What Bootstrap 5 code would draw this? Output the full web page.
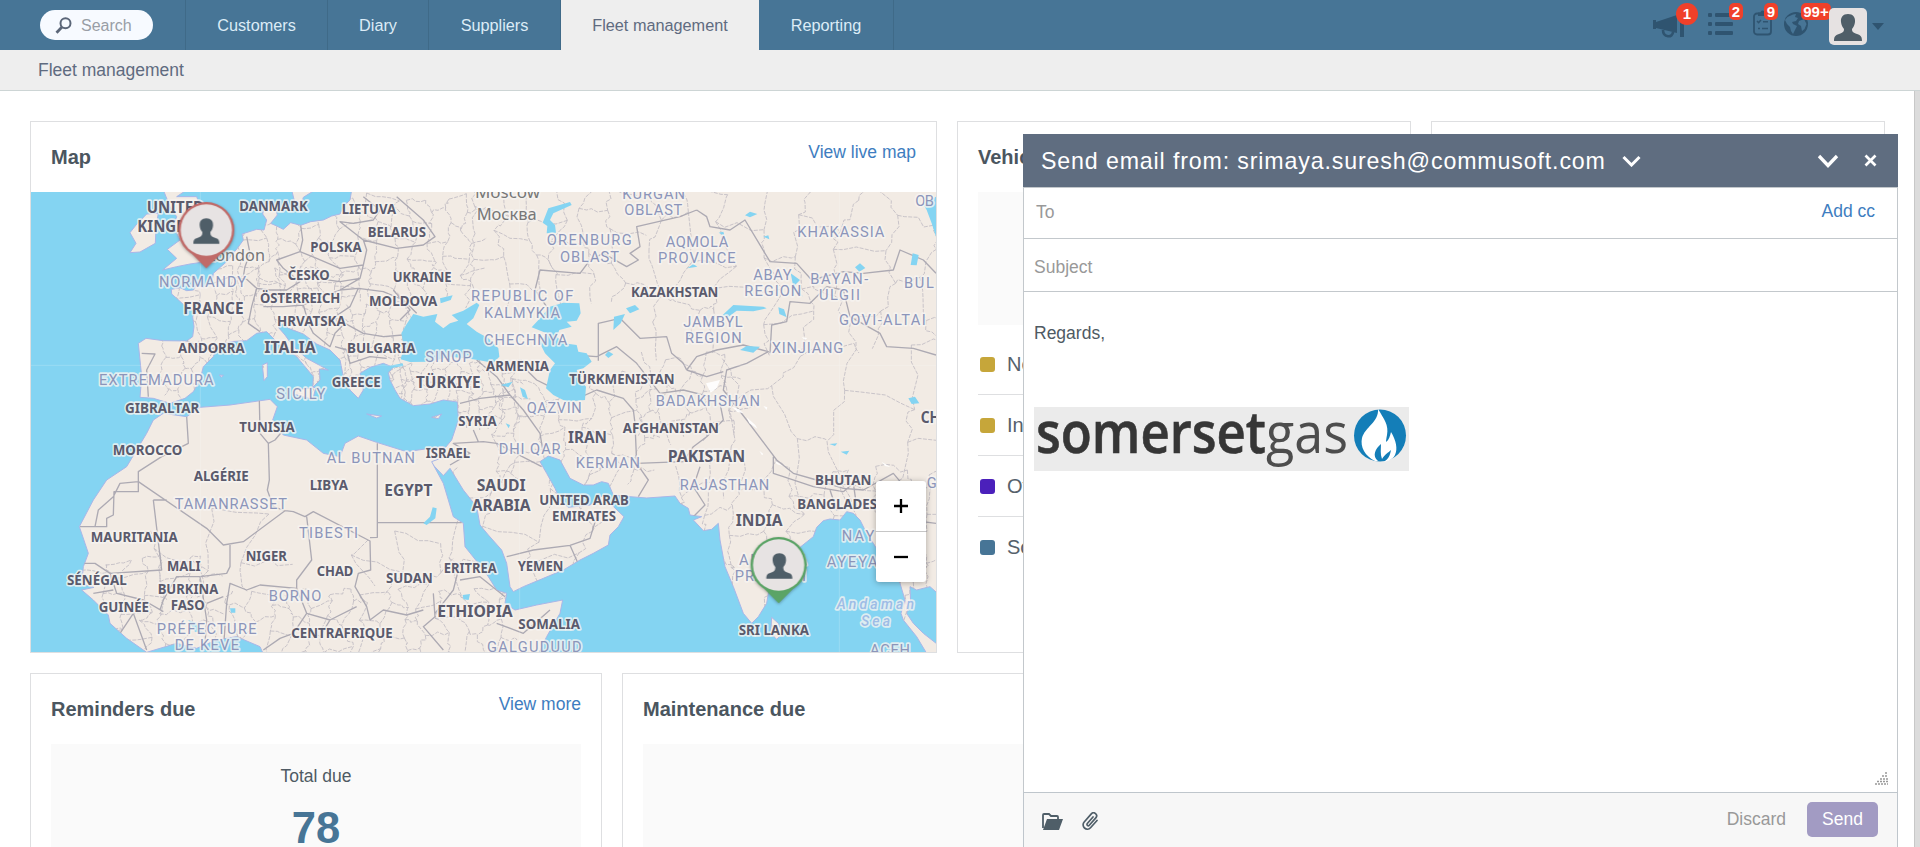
<!DOCTYPE html>
<html lang="en">
<head>
<meta charset="utf-8">
<meta name="viewport" content="width=device-width, initial-scale=1">
<title>Fleet management</title>
<link href="https://cdn.jsdelivr.net/npm/bootstrap@5.3.0/dist/css/bootstrap.min.css" rel="stylesheet">
<style>
body{font-family:"Liberation Sans",Arial,sans-serif;font-size:17.5px;line-height:24px;color:#4f5a63;overflow:hidden;height:847px;background:#fff}
a{color:#3e7dc0;text-decoration:none}
.topbar{height:50px;background:#477596}
.search-wrap{width:186px;padding-left:40px;border-right:1px solid #3f6a88}
.search-pill{width:113px;height:30px;border-radius:15px;background:#f7faff;padding-left:15px;font-size:16px;color:#999ea6}
.topbar .nav-link{height:50px;font-size:16.25px;line-height:50px;padding:0;text-align:center;color:#dcecf7;border-right:1px solid #3f6a88}
.topbar .nav-link.active{background:#eee;color:#5f6b80;border:0}
.tool{position:relative;height:50px;flex:none;color:#2f5470}
.tool svg{position:absolute;left:0}
.count{position:absolute;top:3px;height:17px;line-height:18px;border-radius:5px;background:#f0402a;color:#fff;font-size:15px;font-weight:700;text-align:center}
.subbar{height:41px;background:#eee;border-bottom:1px solid #cdd5d5;padding-left:38px;line-height:41px;color:#5f6b80}
.content{padding:30px 29px 0 30px;height:756px;overflow:hidden;width:1914px}
.panel{border:1px solid #dedfe1;border-radius:0;background:#fff;overflow:hidden;flex:none}
.panel-head{height:70px;padding:0 20px}
.panel-head h2{font-size:20px;font-weight:700;line-height:24px;margin:0;padding-top:23px;color:#4b565f}
.panel-head a{margin-top:18px;line-height:24px}
.graybox{background:#fafafa}
.status{height:61px;font-size:20px;color:#56616b;border-bottom:1px solid #dedfe1;padding-left:2px;gap:12px}
.status:last-child{border-color:transparent}
.swatch{width:15px;height:15px;border-radius:3px;flex:none}
.total{font-size:43.5px;line-height:48px;font-weight:700;color:#477596}
.scrolltrack{position:fixed;right:0;top:91px;bottom:0;width:6px;background:#dcdcdc;border-left:1px solid #c8c8c8}
.zoomer{position:absolute;right:10px;top:289px;width:50px;border-radius:3px;background:#fff;box-shadow:0 1px 6px rgba(0,0,0,.3)}
.zoomer span{height:50px}
.zoomer span:first-child{height:51px;border-bottom:1px solid #c6c6c6}
.mailer{position:fixed;top:134px;right:22px;width:875px;bottom:0;background:#fff;z-index:5}
.mail-head{height:53px;background:#5f6d80;color:#fff;font-size:23.2px;padding:0 21px 0 18px;flex:none}
.mail-row{border:1px solid #c3c8cc;border-bottom:0;flex:none}
.ph{color:#999}
.mail-foot{height:55px;background:#f7f7f7;border:1px solid #bfc6cc;border-bottom:0;padding:0 19px 2px 18px;flex:none;color:#999}
.mail-foot svg{margin-top:4px}
.send,.send:hover{background:#a29bc3;color:#fff;width:71px;height:35px;border-radius:5px;padding:0;font-size:17.5px;line-height:33px;border:0;margin-left:21px}
.country{font-family:"Noto Sans",sans-serif;font-weight:700;fill:#5a5a6c}
.region{font-family:Roboto,"Noto Sans",sans-serif;fill:#8c95ba}
.city{font-family:"Noto Sans",sans-serif;fill:#777}
.sea{font-family:Roboto,sans-serif;font-style:italic;font-weight:500;fill:#9dbce6}
.lbl{paint-order:stroke;stroke:#f7f4f1;stroke-width:10;stroke-linejoin:round;stroke-opacity:.8}
</style>
</head>
<body>
<header class="topbar d-flex">
  <div class="search-wrap d-flex align-items-center">
    <div class="search-pill d-flex align-items-center">
      <svg width="17" height="17" viewBox="0 0 17 17" fill="none" stroke="#5b6678"><circle cx="10.5" cy="6.2" r="5" stroke-width="2"/><path d="M7 10L1.5 15.7" stroke-width="2.8"/></svg>
      <span style="margin-left:9px;margin-top:2px">Search</span>
    </div>
  </div>
  <nav class="nav flex-nowrap">
    <a class="nav-link" href="#" style="width:142px">Customers</a>
    <a class="nav-link" href="#" style="width:101px">Diary</a>
    <a class="nav-link" href="#" style="width:132px">Suppliers</a>
    <a class="nav-link active" href="#" style="width:198px">Fleet management</a>
    <a class="nav-link" href="#" style="width:135px">Reporting</a>
  </nav>
  <div class="d-flex ms-auto" style="padding-right:36px">
    <div class="tool" style="width:31px"><svg style="top:15px" width="31" height="23" viewBox="0 0 31 23" fill="currentColor"><path d="M0 5h3v2L24 0v18L3 13v1H0zM27 1h4v21h-4z"/><path d="M10 15c0 8 10 8 10 2" fill="none" stroke="currentColor" stroke-width="2.6"/></svg><span class="count" style="left:23px;width:22px;height:22px;line-height:22px;border-radius:50%">1</span></div>
    <div class="tool" style="width:25px;margin-left:24px"><svg style="top:13px" width="25" height="22" viewBox="0 0 25 22" fill="currentColor"><rect y="0" width="4" height="4" rx="1"/><rect y="9" width="4" height="4" rx="1"/><rect y="18" width="4" height="4" rx="1"/><rect x="7" y="0" width="18" height="4" rx="1"/><rect x="7" y="9" width="18" height="4" rx="1"/><rect x="7" y="18" width="18" height="4" rx="1"/></svg><span class="count" style="left:21px;width:14px">2</span></div>
    <div class="tool" style="width:19px;margin-left:20px"><svg style="top:9px" width="19" height="27" viewBox="0 0 19 27" fill="none" stroke="currentColor" stroke-width="1.8"><rect x="1" y="4.5" width="17" height="21" rx="3"/><path d="M4 12l1.6 1.6L8 11M10 12.800h5M5 19.500h2M9 19.500h6" stroke-width="1.500"/><path d="M5 7V3.500h2.500a2 2 0 0 1 4 0H14V7z" fill="currentColor" stroke="none"/></svg><span class="count" style="left:11px;width:14px">9</span></div>
    <div class="tool" style="width:24px;margin-left:12px"><svg style="top:12px" width="24" height="24" viewBox="0 0 24 24"><circle cx="12" cy="12" r="12" fill="currentColor"/><path d="M3.500 5L9 2.500l3-.5-1 3 3 1-2 3-4 1 1 2 4 2-2 4-2 4-2-3-1-4-3-3-2-4zM15 9l5-2 2.500 5-2 5-2.500 2-1-5-3-2z" fill="#477596"/></svg><span class="count" style="left:17px;width:30px">99+</span></div>
    <div class="tool" style="width:38px;margin-left:21px"><svg style="top:8px" width="38" height="37" viewBox="0 0 38 37"><rect width="38" height="37" rx="5" fill="#e6e2e2"/><path d="M19 6c5 0 7.500 3.500 7 8-.3 3-1.500 5-3 7 0 3 1 3.500 5 5 4 1.300 5 3 5 7H5c0-4 1-5.700 5-7 4-1.500 5-2 5-5-1.500-2-2.700-4-3-7-.5-4.500 2-8 7-8z" fill="#4f5e68"/></svg></div>
    <div class="tool" style="width:12px;margin-left:5px"><svg style="top:23px" width="12" height="7"><path d="M0 0h12L6 7z" fill="currentColor"/></svg></div>
  </div>
</header>
<div class="subbar">Fleet management</div>

<main class="content d-flex flex-column" style="gap:20px">
  <div class="d-flex" style="gap:20px;height:532px">
    <section class="panel" style="width:907px">
      <div class="panel-head d-flex justify-content-between align-items-start"><h2>Map</h2><a href="#">View live map</a></div>
      <div class="position-relative">
        <svg id="map" class="d-block" width="905" height="460" viewBox="3 6 2715 1380">
          <defs>
            <clipPath id="landclip">
              <path id="eurasia" d="M325 460L348 445 400 452 470 453 488 440 492 410 488 380 500 365 465 348 440 325 425 312 424 298 450 293 470 302 490 300 500 285 520 292 545 280 550 250 590 215 605 195 622 175 640 150 636 132 680 118 702 120 710 90 698 72 705 40 735 44 742 75 722 100 740 108 760 118 782 98 812 106 842 95 880 90 905 78 930 72 940 50 960 30 965 0H2725V1212L2700 1190 2660 1200 2640 1190 2642 1240 2630 1270 2650 1300 2680 1330 2725 1365V1390H2690L2660 1340 2620 1290 2613 1270 2625 1230 2610 1180 2560 1110 2530 1060 2510 1030 2490 990 2470 970 2450 965 2430 990 2400 987 2380 992 2360 1012 2350 1040 2310 1072 2260 1120 2220 1180 2210 1240 2185 1280 2165 1300 2140 1270 2110 1190 2085 1130 2070 1050 2065 1000 2045 1018 2020 1022 1990 990 2015 980 1980 975 1975 955 1950 940 1935 918 1850 924 1800 920 1750 915 1735 880 1715 875 1690 885 1660 885 1620 865 1590 810 1555 798 1530 815 1550 850 1575 895 1590 930 1615 952 1680 945 1720 915 1735 935 1782 980 1765 1010 1740 1035 1735 1065 1690 1090 1650 1110 1600 1140 1540 1165 1480 1190 1450 1205 1440 1190 1430 1120 1415 1080 1375 1035 1350 1005 1340 950 1300 900 1260 835 1240 857 1200 815 1240 780 1265 750 1285 690 1282 636 1240 630 1200 642 1150 647 1110 625 1095 600 1080 570 1075 548 1090 532 1060 520 1020 532 990 550 1000 600 985 625 960 600 940 560 930 510 900 480 860 462 820 432 775 415 760 400 745 412 765 435 790 470 830 505 895 540 868 537 870 570 848 592 850 560 800 500 740 455 710 425 680 430 650 452 600 455 560 472 550 500 520 530 510 570 490 605 465 625 420 640 370 625 330 622 335 560Z"/>
              <path id="africa" d="M370 690L400 670 470 680 510 652 600 645 720 628 742 650 728 690 760 735 830 750 880 790 930 800 945 760 985 738 1040 757 1130 785 1200 775 1240 770 1245 800 1205 815 1240 880 1270 980 1300 1000 1305 1070 1345 1120 1375 1160 1400 1200 1430 1210 1425 1240 1455 1260 1520 1245 1598 1230 1590 1270 1550 1340 1525 1392H700L690 1370 620 1340 560 1350 500 1375 440 1360 350 1387 290 1345 240 1300 235 1275 190 1230 155 1200 192 1192 155 1182 160 1130 175 1090 165 1060 148 1010 190 930 230 870 290 830 320 780 350 730Z"/>
              <path id="isles" d="M400 0H470L440 20 500 20 515 60 530 100 560 150 570 180 548 212 480 222 440 230 398 240 440 205 412 178 450 150 430 110 440 80 420 50ZM350 72L385 70 378 110 376 160 330 186 300 188 318 160 300 128 318 105ZM785 0H855L820 22 812 50 795 40ZM697 525L712 518 712 560 702 572ZM790 600L858 592 848 628 790 612ZM1010 672L1055 678 1040 684ZM1205 682L1235 672 1225 686ZM2225 1282L2245 1300 2258 1330 2240 1348 2222 1330ZM568 555L580 556 574 562Z"/>
            </clipPath>
            <g id="person"><path d="M0-38c14 0 21 9 20 22-1 9-4 14-8 19 0 10 2 13 14 17 10 3 13 7 13 18h-78c0-11 3-15 13-18 12-4 14-7 14-17-4-5-7-10-8-19-1-13 6-22 20-22z" fill="#4f5e68"/></g>
          </defs>
          <rect x="3" y="6" width="2715" height="1380" fill="#84d4f2"/>
          <g fill="#f2ebe4" stroke="#a9b6e8" stroke-width="3"><use href="#eurasia"/><use href="#africa"/><use href="#isles"/></g>
          <g clip-path="url(#landclip)" fill="none" stroke="#c2bdc4" stroke-linejoin="round">
            <path id="mesh" stroke-width="2.600" stroke-dasharray="12 4"/>
            <g stroke="#adaab3" stroke-width="4">
              <path d="M335 490L375 492 350 540 355 620M470 452L520 478 590 470M545 282L600 260 650 268 680 295 665 350 655 400 690 425M650 140L660 190 645 230 640 260M812 106L818 150 810 185 740 210 760 235 810 275 770 300 720 300 680 295M810 185L860 205 930 235 1000 225 1010 180 1000 150 930 95 970 100 1030 90 1050 60 1000 20M1000 150L1100 175 1180 165 1215 140 1180 90 1100 20M860 265L930 275 990 265 1000 225M700 350L760 350 820 345 880 320 930 300 990 265M930 300L985 295 1060 305 1120 330 1160 370M820 345L830 380 900 390 960 350 985 295M830 390L850 430 900 470 915 430 945 400 1000 430 1060 440 1118 435M915 470L950 480 960 520 1020 500 1070 505M1090 300L1140 360 1110 390"/>
              <path d="M470 680L475 760 395 800 325 845 325 905H252L250 975 230 985V1010H150M325 875L270 880 250 920 205 960 195 1010M325 875L530 1015 580 1065 640 1055 765 962 790 965 825 980 850 965 1020 1053 1022 1140 985 1150 975 1190 1010 1250 1020 1290 1060 1260 1130 1275 1180 1260M688 630L690 730 715 760 735 750 760 720M715 760L718 870 712 900 730 950 765 962M1042 760L1042 1042 1020 1043M1042 998H1295M830 980L845 1110 800 1170 800 1195 690 1185 650 1200 600 1180 590 1240 580 1380M600 1065V1130L590 1150 510 1160 440 1160 400 1230 390 1260M370 930L395 1140 240 1150 195 1120 160 1120M370 930H410M240 1150L260 1210 340 1230 400 1265M190 1210L250 1200M270 1330L310 1270 350 1380M510 1160L530 1290 525 1360M530 1240L580 1220M800 1195L830 1270 790 1330 750 1345 700 1380M830 1270L900 1290 980 1250M900 1290L870 1340M1210 1210L1215 1280 1180 1310 1240 1380M1290 1120L1270 1200 1215 1270M1290 1170L1350 1160 1425 1220M1400 1300L1480 1330 1560 1260"/>
              <path d="M1260 825L1320 790 1270 760 1360 755 1400 760 1535 830M1330 720L1345 755M1290 640L1350 625 1440 615 1480 660 1530 730 1540 790M1440 615L1400 560 1340 510M1430 1100L1510 1080 1620 1066 1642 1115M1620 1066L1680 1045 1700 980M1480 530L1520 570 1560 590M1655 620L1700 600 1780 625 1810 660 1815 700 1820 820 1855 870 1825 920M1820 820L1960 815 1990 770 2030 740 2080 690 2070 640M1705 512V400L1770 385 1830 445 1910 440 1925 490 1960 520 1970 540M1630 495L1700 500 1760 470 1820 520 1890 610 1960 600 2040 620M1970 540L2000 500 2060 480 2140 465 2215 485 2150 520 2090 540 2080 600 2150 690 2210 770 2240 810 2290 850 2360 870 2440 895M1970 540L2030 560 2080 545M2220 490L2225 405 2270 395 2280 335 2340 340 2390 290M2000 60L1950 80 1820 110 1830 170 1800 190 1825 210 1790 230 1720 190 1680 210 1650 250 1530 240 1515 300 1550 350M2000 60L2030 80 2040 110 2100 120 2145 90 2220 215 2300 220 2345 270 2440 245 2500 250 2590 240 2610 180 2680 210 2718 250M2390 290L2440 300 2460 380 2550 430 2570 470 2650 475 2718 495M2230 800L2230 850 2260 860 2350 890 2440 905M2400 900L2420 960 2450 950M2440 895L2500 900 2590 850 2640 910M2440 905L2470 880 2480 950M1990 980L2025 945 1990 890 2010 830M2610 1180L2600 1100 2640 1030 2640 990 2718 1000"/>
            </g>
          </g>
          <g fill="#84d4f2">
            <path d="M1114 430L1130 402 1150 372 1180 380 1222 372 1215 395 1240 415 1260 400 1285 392 1265 375 1300 362 1340 338 1348 345 1330 385 1310 402 1340 425 1375 445 1405 475 1408 500 1390 518 1330 508 1260 500 1200 515 1140 516 1112 508 1122 470ZM1230 325L1268 316 1262 330 1232 340ZM1075 528L1118 520 1120 528 1085 534Z"/>
            <path d="M1530 385L1560 350 1600 338 1648 340 1652 370 1640 392 1610 395 1625 410 1588 420 1580 440 1602 460 1640 465 1645 485 1670 490 1685 515 1660 535 1640 540 1650 570 1668 590 1665 630 1610 635 1570 615 1548 595 1560 540 1575 520 1545 490 1530 460 1550 430 1505 412Z"/>
            <path d="M1555 55L1620 36 1625 45 1570 70 1560 90 1575 105 1578 128 1550 130 1552 108 1538 98ZM1750 420L1752 380 1785 372 1772 400ZM1788 355L1815 345 1828 358 1800 370ZM2078 375L2110 345 2200 350 2210 355 2170 364 2120 362 2090 385ZM2130 480L2150 468 2190 470 2170 488ZM2245 352L2262 358 2270 382 2248 372ZM2145 76L2160 65 2182 72 2160 82ZM2066 128L2080 125 2084 138ZM2200 140L2215 136 2218 148ZM1972 235L1990 222 2002 230ZM2475 232L2490 220 2506 234 2488 245ZM2642 225L2648 190 2666 195 2660 226ZM2678 40L2718 20V140L2705 100 2690 60ZM2282 250L2310 270 2290 290 2320 320 2292 300ZM1725 495L1735 484 1750 493 1735 504ZM1412 585L1448 575 1435 592ZM1470 592L1485 600 1494 628 1478 620ZM2635 625L2655 620 2668 640 2645 642ZM1180 1000L1200 980 1208 952 1220 955 1216 985 1190 1005ZM600 1255H616V1268H603ZM1298 1215L1320 1212 1316 1230 1300 1228ZM475 1290L500 1300 508 1320 525 1328 495 1325ZM2398 762L2422 760 2415 768ZM2432 785L2458 782 2450 794ZM1427 700L1440 705 1436 715Z"/>
          </g>
          <g fill="#fff" opacity=".9"><path d="M2028 580L2070 570 2060 595 2042 608ZM2105 650L2128 658 2140 670 2122 666ZM2150 682L2176 705 2182 716 2158 700ZM2188 782L2200 792 2196 796ZM2235 812L2258 828 2240 822ZM2315 442L2332 444 2325 450ZM2200 648L2212 652 2210 660ZM2555 815L2582 832 2565 828Z"/></g>
          <path d="M3 526H2718M511 6V1386M1469 6V1386M2428 6V1386" stroke="#fff" stroke-width="2" opacity=".28"/>
          <g id="labels"></g>
          <g id="pins" style="filter:drop-shadow(0 3px 5px rgba(0,0,0,.3))">
            <g transform="translate(529 120)" fill="#c06a68"><path d="M-45 70H45L0 115z"/><circle r="84"/><circle r="77" fill="#e7e3e3"/><use href="#person" y="3"/></g>
            <g transform="translate(2246 1125)" fill="#5ba466"><path d="M-45 70H45L0 115z"/><circle r="84"/><circle r="77" fill="#e7e3e3"/><use href="#person" x="2" y="3"/></g>
          </g>
        </svg>
        <div class="zoomer">
          <span class="d-flex align-items-center justify-content-center"><svg width="14" height="14"><path d="M0 7h14M7 0v14" stroke="#000" stroke-width="2.300"/></svg></span>
          <span class="d-flex align-items-center justify-content-center"><svg width="14" height="14"><path d="M0 7h14" stroke="#000" stroke-width="2.300"/></svg></span>
        </div>
      </div>
    </section>
    <section class="panel" style="width:454px">
      <div class="panel-head"><h2>Vehicles</h2></div>
      <div style="padding:0 20px">
        <div class="graybox" style="height:133px;margin-bottom:9px"></div>
        <div class="status d-flex align-items-center"><i class="swatch" style="background:#c6a63a"></i>No status</div>
        <div class="status d-flex align-items-center"><i class="swatch" style="background:#c6a63a"></i>In use</div>
        <div class="status d-flex align-items-center"><i class="swatch" style="background:#4b20bb"></i>Off road</div>
        <div class="status d-flex align-items-center"><i class="swatch" style="background:#477596"></i>Sold</div>
      </div>
    </section>
    <section class="panel" style="width:454px"></section>
  </div>
  <div class="d-flex" style="gap:20px;height:300px">
    <section class="panel" style="width:572px">
      <div class="panel-head d-flex justify-content-between align-items-start"><h2>Reminders due</h2><a href="#">View more</a></div>
      <div class="graybox text-center" style="margin:0 20px;height:200px;padding-top:20px"><div>Total due</div><div class="total" style="margin-top:16px">78</div></div>
    </section>
    <section class="panel" style="width:1263px">
      <div class="panel-head"><h2>Maintenance due</h2></div>
      <div class="graybox" style="margin:0 20px;height:200px"></div>
    </section>
  </div>
</main>
<div class="scrolltrack"></div>

<section class="mailer d-flex flex-column">
  <div class="mail-head d-flex align-items-center">
    <span id="from" style="letter-spacing:.86px;white-space:nowrap">Send email from: srimaya.suresh@commusoft.com</span>
    <svg style="margin-left:16px" width="19" height="12" fill="none" stroke="#fff" stroke-width="3"><path d="M1.500 2l8 8 8-8"/></svg>
    <svg class="ms-auto" width="22" height="14" fill="none" stroke="#fff" stroke-width="3.300"><path d="M2 2l9 9.500L20 2"/></svg>
    <svg style="margin-left:25px" width="13" height="13" stroke="#fff" stroke-width="2.700"><path d="M1.500 1.500l10 10M11.500 1.500l-10 10"/></svg>
  </div>
  <div class="mail-row d-flex justify-content-between" style="height:51px;padding:11px 22px 0 12px"><span class="ph" style="padding-top:1px">To</span><a href="#">Add cc</a></div>
  <div class="mail-row ph" style="height:53px;padding:16px 10px 0">Subject</div>
  <div class="mail-row flex-grow-1 position-relative" style="padding:29px 10px">
    <div>Regards,</div>
    <svg class="d-block" style="margin-top:62px" width="375" height="64" viewBox="0 0 375 64">
      <rect width="375" height="64" fill="#ebebeb"/>
      <g font-family="Open Sans, sans-serif"><text x="2" y="45.500" font-size="57" font-weight="600" fill="#363636" stroke="#363636" stroke-width=".6" textLength="230" lengthAdjust="spacingAndGlyphs">somerset</text><text x="232" y="45.500" font-size="57" font-weight="500" fill="#4d4d4d" textLength="82" lengthAdjust="spacingAndGlyphs">gas</text></g>
      <circle cx="346" cy="28.500" r="26" fill="#147eb8"/>
      <path d="M344 2c6 10 11 16 9 26-.5 3-1 5-1 7 3-2 4-6 5-10 5 8 7 17 4 23-2 4-7 6-11 7 4-3 6-6 7-12-3 3-6 4-9 9-2-5-1-10-1-15-6 5-9 12-3 17l-3 0c-10-5-15-14-13-23 3-11 17-16 16-29z" fill="#fff"/>
    </svg>
    <svg class="position-absolute" style="right:9px;bottom:7px" width="13" height="13" stroke="#999" stroke-width="1.500" stroke-dasharray="2 1"><path d="M10 1h3M7 4h6M5 7h8M2 9.500h11M0 12h13"/></svg>
  </div>
  <div class="mail-foot d-flex align-items-center">
    <svg width="21" height="17" viewBox="0 0 21 17"><path d="M1 15V2q0-1 1-1h5l2 2h6q1 0 1 1v2" fill="none" stroke="#4f5e68" stroke-width="1.800"/><path d="M5 6h16l-4 11H1z" fill="#4f5e68"/></svg>
    <svg style="margin-left:18px" width="18" height="18" viewBox="0 0 18 18" fill="none" stroke="#4f5e68" stroke-width="1.700" stroke-linecap="round"><path d="M12 5L6.300 11.500a1.300 1.300 0 0 0 2 1.800l6.500-7.400a3 3 0 0 0-4.500-4L3.200 10a4.200 4.200 0 0 0 6.300 5.700L16 8.500"/></svg>
    <span class="ms-auto">Discard</span><button class="btn send">Send</button>
  </div>
</section>
<script src="https://cdn.jsdelivr.net/npm/bootstrap@5.3.0/dist/js/bootstrap.bundle.min.js"></script>
<script>
// [text, left, right, baseline, size]
const countries=[["UNITED",350,522,68,48],["KINGDOM",322,550,126,48],["DANMARK",628,833,62],["LIETUVA",935,1098,71],["BELARUS",1013,1188,142],["POLSKA",841,995,187],["ČESKO",773,899,270],["UKRAINE",1088,1265,277],["ÖSTERREICH",690,931,340],["MOLDOVA",1017,1222,348],["FRANCE",460,641,371,48],["HRVATSKA",741,947,408],["ANDORRA",444,644,490],["ITALIA",703,857,489,48],["BULGARIA",951,1157,489],["GREECE",905,1052,592],["TÜRKIYE",1158,1352,594,48],["GIBRALTAR",285,508,669],["TUNISIA",628,794,727],["ARMENIA",1368,1557,542],["KAZAKHSTAN",1803,2065,321],["TÜRKMENISTAN",1618,1934,581],["SYRIA",1285,1400,707],["MOROCCO",248,457,795],["ALGÉRIE",491,656,873],["LIBYA",839,954,901],["EGYPT",1063,1207,918,48],["ISRAEL",1187,1320,805],["MAURITANIA",182,443,1055],["MALI",411,512,1142],["NIGER",647,771,1112],["CHAD",860,970,1158],["SUDAN",1068,1208,1180],["ERITREA",1241,1400,1150],["SÉNÉGAL",111,290,1184],["BURKINA",383,565,1211],["FASO",422,524,1260],["GUINÉE",206,357,1265],["CENTRAFRIQUE",784,1088,1345],["ETHIOPIA",1222,1448,1280,48],["SAUDI",1340,1487,903,48],["ARABIA",1325,1502,962,48],["AFGHANISTAN",1778,2067,728],["IRAN",1614,1731,760,48],["PAKISTAN",1913,2146,817,48],["UNITED ARAB",1528,1796,944],["EMIRATES",1566,1758,993],["BHUTAN",2355,2524,884],["BANGLADESH",2302,2572,957],["INDIA",2117,2258,1008,48],["YEMEN",1463,1600,1143],["SOMALIA",1465,1650,1317],["SRI LANKA",2126,2337,1334],["CH",2672,2730,700,46]];
const regions=[["NORMANDY",387,648,290],["EXTREMADURA",207,551,585],["SICILY",739,886,628],["SINOP",1186,1325,515],["REPUBLIC OF",1323,1630,334],["KALMYKIA",1362,1590,384],["CHECHNYA",1362,1612,464],["QAZVIN",1490,1655,669],["KURGAN",1777,1965,26],["OBLAST",1783,1957,76],["ORENBURG",1550,1805,165],["OBLAST",1590,1767,215],["AQMOLA",1907,2095,171],["PROVINCE",1884,2117,220],["ABAY",2170,2285,270],["REGION",2143,2314,319],["BAYAN-",2341,2515,282],["ULGII",2367,2490,331],["BUL",2622,2712,293],["OB",2656,2712,47],["KHAKASSIA",2302,2563,141],["GOVI-ALTAI",2427,2687,406],["XINJIANG",2225,2440,490],["JAMBYL",1960,2138,410],["REGION",1965,2135,459],["BADAKHSHAN",1877,2190,648],["AL BUTNAN",890,1155,818],["TAMANRASSET",434,771,957],["TIBESTI",807,984,1043],["BORNO",716,874,1232],["PRÉFECTURE",380,680,1332],["DE KEVE",434,627,1381],["DHI QAR",1406,1592,791],["KERMAN",1637,1830,834],["RAJASTHAN",1949,2218,899],["G",2690,2714,895],["ANDHRA",2127,2330,1124],["PRADESH",2114,2328,1174],["NAYPY",2435,2600,1053],["AYEYARW",2390,2620,1131],["GALGUDUUD",1371,1655,1387],["ACEH",2520,2640,1395]];
const cities=[["London",530,705,213,46],["Moscow",1335,1530,25,46],["Москва",1340,1520,90,46]];
const seas=[["Andaman",2420,2652,1258,42],["Sea",2493,2580,1308,42]];
const NS="http://www.w3.org/2000/svg",layer=document.getElementById("labels");
function put(list,cls,size,adjust){
  for(const [t,l,r,y,s] of list){
    const e=document.createElementNS(NS,"text");
    e.textContent=t;e.setAttribute("class","lbl "+cls);
    e.setAttribute("x",l);e.setAttribute("y",y);e.setAttribute("font-size",s||size);
    e.setAttribute("textLength",r-l);e.setAttribute("lengthAdjust",adjust);
    layer.append(e);
  }
}
put(cities,"city",46,"spacingAndGlyphs");put(regions,"region",44,"spacing");
put(countries,"country",44,"spacingAndGlyphs");put(seas,"sea",44,"spacing");

// Administrative boundaries: a jittered honeycomb, finer where provinces are small
let seed=7;const rnd=()=>(seed=(seed*16807)%2147483647)/2147483647;
function mesh(x0,y0,x1,y1,c){
  const P={},at=(i,j)=>P[i+","+j]||(P[i+","+j]=[x0+i*c+(rnd()-.5)*c*.8,y0+j*c*.8+(rnd()-.5)*c*.6]);
  let d="";
  const link=(a,b)=>{d+="M"+a.map(Math.round);for(let k=1;k<5;k++)d+="L"+[0,1].map(n=>Math.round(a[n]+(b[n]-a[n])*k/4+(k<4?(rnd()-.5)*c*.22:0)));};
  for(let i=0;i*c<x1-x0;i++)for(let j=0;j*c*.8<y1-y0;j++){
    link(at(i,j),at(i,j+1));if((i+j)%2)link(at(i,j),at(i+1,j));
  }
  return d;
}
document.getElementById("mesh").setAttribute("d",
  mesh(400,240,960,620,48)+mesh(640,20,1340,330,56)+mesh(960,340,1140,620,40)+mesh(1080,520,1460,690,34)+
  mesh(1340,6,1800,330,84)+mesh(1400,560,1840,860,70)+mesh(1850,6,2718,440,120)+mesh(1840,500,2100,700,62)+
  mesh(2100,500,2718,860,170)+mesh(1960,830,2718,1300,84)+mesh(160,1110,560,1380,62)+mesh(600,1200,1420,1390,58)+
  mesh(1280,830,1720,1180,120)+mesh(1000,1040,1280,1200,100)+mesh(380,1000,800,1180,150));
</script>
</body>
</html>
